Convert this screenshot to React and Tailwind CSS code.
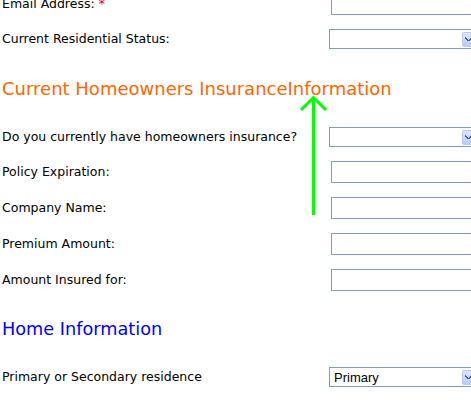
import React from "react";

const LABEL = "text-[12.5px] text-black leading-none";

function TextInput() {
  return <div className="ml-[4px] h-[22px] w-[160px] shrink-0 border border-[#7f9db9] bg-white" />;
}

function Select({ value }) {
  return (
    <div className="ml-[2px] h-[20px] w-[152px] shrink-0 border border-[#7f9db9] bg-white flex items-center">
      <span className="flex-1 pl-[4px] font-['Liberation_Sans',Arial,sans-serif] text-[13px] leading-none text-black">
        {value}
      </span>
      <span className="mr-[1px] h-[15px] w-[17px] rounded-[2px] border border-[#b9c9f3] bg-gradient-to-b from-[#dde6fc] to-[#b9ccf8] flex items-center pl-[2px]">
        <svg width="8" height="6" viewBox="0 0 8 6">
          <path d="M0 1 L1 1 L1 2 L2 2 L2 3 L3 3 L3 4 L4 4 L4 3 L5 3 L5 2 L6 2 L6 1 L7 1 L7 3 L6 3 L6 4 L5 4 L5 5 L2 5 L2 4 L1 4 L1 3 L0 3 Z" fill="#4d6185" />
        </svg>
      </span>
    </div>
  );
}

function Row({ label, star, children, className = "" }) {
  return (
    <div className={`flex items-center ${className}`}>
      <div className={`w-[327px] shrink-0 pl-[2px] ${LABEL}`}>
        {label}
        {star && <span className="text-red-600"> *</span>}
      </div>
      {children}
    </div>
  );
}

export default function App() {
  return (
    <div className="relative h-[400px] w-[471px] overflow-hidden bg-white font-['DejaVu_Sans',Verdana,sans-serif]">
      <div className="mt-[-7px]">
        <Row label="Email Address:" star>
          <TextInput />
        </Row>
        <Row label="Current Residential Status:" className="mt-[14px]">
          <Select />
        </Row>

        <h2 className="mt-[29px] pl-[2px] text-[18px] leading-[22px] text-[#ff6600]">
          Current Homeowners InsuranceInformation
        </h2>

        <Row label="Do you currently have homeowners insurance?" className="mt-[27px]">
          <Select />
        </Row>
        <Row label="Policy Expiration:" className="mt-[14px]">
          <TextInput />
        </Row>
        <Row label="Company Name:" className="mt-[14px]">
          <TextInput />
        </Row>
        <Row label="Premium Amount:" className="mt-[14px]">
          <TextInput />
        </Row>
        <Row label="Amount Insured for:" className="mt-[14px]">
          <TextInput />
        </Row>

        <h2 className="mt-[27px] pl-[2px] text-[17.7px] leading-[22px] text-[#0000ff]">
          Home Information
        </h2>

        <Row label="Primary or Secondary residence" className="mt-[27px]">
          <Select value="Primary" />
        </Row>
      </div>

      {/* green annotation arrow */}
      <svg className="absolute left-[298px] top-[94px]" width="30" height="124" viewBox="0 0 30 124">
        <path d="M15.5 3 L15.5 121" stroke="#00ff00" strokeWidth="3" fill="none" />
        <path d="M3 16 L15.5 3.5 L28 16" stroke="#00ff00" strokeWidth="3" fill="none" />
      </svg>
    </div>
  );
}
